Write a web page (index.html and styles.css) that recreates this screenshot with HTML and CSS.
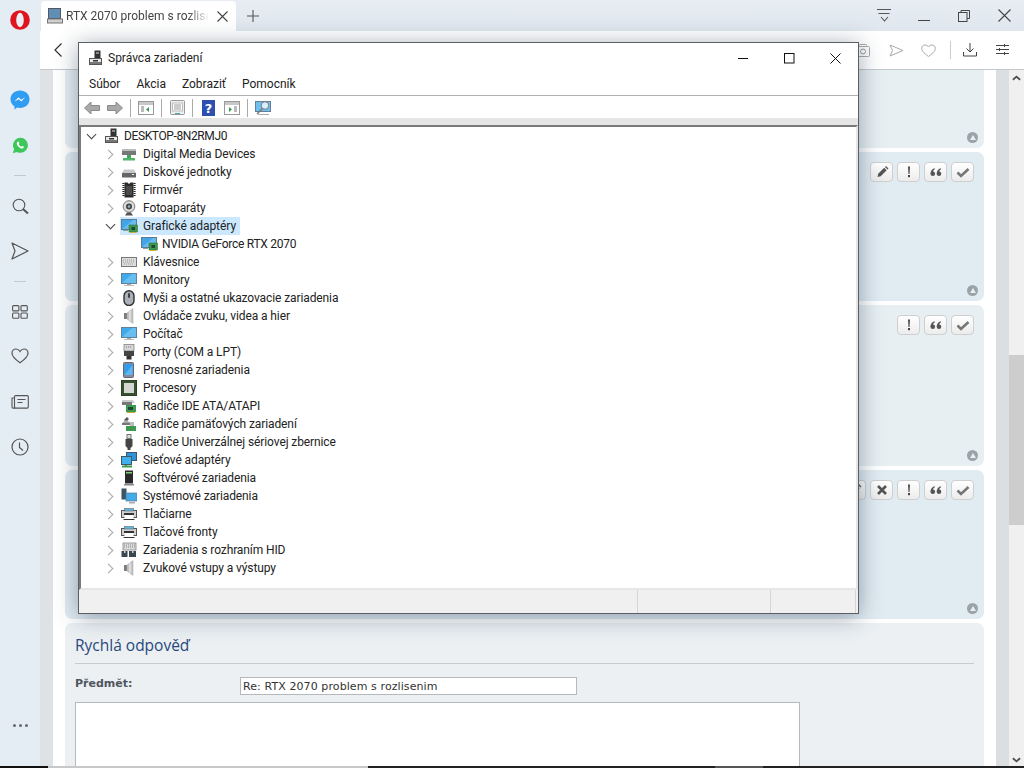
FILE: index.html
```html
<!DOCTYPE html>
<html lang="sk">
<head>
<meta charset="utf-8">
<title>Správca zariadení</title>
<link rel="stylesheet" href="styles.css">
</head>
<body>
<svg class="defs" width="0" height="0">
  <defs>
    <symbol id="i-pc" viewBox="0 0 16 16"><rect x="6.500" y="0.500" width="6" height="8" fill="#333"/><rect x="8" y="2.500" width="3" height="1" fill="#ddd"/><rect x="1.500" y="8.500" width="12" height="6" fill="#e8e8e8" stroke="#555"/><rect x="2" y="12" width="11" height="2" fill="#777"/><rect x="5" y="10" width="5" height="1.500" fill="#333"/></symbol>
    <symbol id="i-media" viewBox="0 0 16 16"><rect x="1" y="4" width="14" height="5" fill="#777"/><rect x="1" y="3" width="14" height="2" fill="#bbb"/><rect x="6" y="9" width="4" height="3" fill="#3fa45b"/><rect x="2" y="12" width="12" height="2.500" fill="#4fb56a"/></symbol>
    <symbol id="i-disk" viewBox="0 0 16 16"><path d="M3 5.500h10l2 3.500H1z" fill="#c8c8c8"/><rect x="1" y="9" width="14" height="4.500" fill="#666"/><rect x="11" y="10" width="2" height="1" fill="#cfe"/></symbol>
    <symbol id="i-chip" viewBox="0 0 16 16"><path d="M2.500 1v14M13.500 1v14" stroke="#222" stroke-width="2" stroke-dasharray="1 1"/><path d="M1.500 1v14M14.500 1v14" stroke="#777" stroke-dasharray="1 1"/><path d="M3.500 0.500h3l1.500 1.500 1.500-1.500h3v15h-9z" fill="#2c2c2c"/><rect x="5" y="4" width="6" height="9" fill="#4a4a4a"/></symbol>
    <symbol id="i-cam" viewBox="0 0 16 16"><circle cx="8" cy="6.500" r="5.800" fill="#dcdcdc" stroke="#777"/><circle cx="8" cy="6.500" r="3" fill="#444"/><circle cx="8" cy="6.500" r="1.300" fill="#8fb6c4"/><path d="M4 15.500h8l-2-3H6z" fill="#555"/></symbol>
    <symbol id="i-gpu" viewBox="0 0 17 14"><rect x="0.500" y="0.500" width="15" height="10" fill="#42a5e8" stroke="#5a7d95"/><path d="M1 10l11-9h3v9z" fill="#8fd0f5" opacity=".5"/><rect x="8" y="6" width="8.500" height="7" fill="#3c9a4e" stroke="#2a6a3a" stroke-width=".5"/><rect x="10.500" y="8" width="3.500" height="3" fill="#243"/><rect x="9" y="13" width="6" height="1" fill="#d6a93c"/><rect x="2" y="11" width="5" height="1" fill="#999"/></symbol>
    <symbol id="i-kbd" viewBox="0 0 16 16"><rect x="0.500" y="3.500" width="15" height="9" fill="#ddd" stroke="#777"/><path d="M2 6h12M2 8h12M3 10h10" stroke="#999" stroke-dasharray="1 1"/></symbol>
    <symbol id="i-mon" viewBox="0 0 16 16"><rect x="0.500" y="1.500" width="15" height="10" fill="#3fa9ec" stroke="#5f8299"/><path d="M1 11l10-9h4v9z" fill="#9ad6f7" opacity=".45"/><rect x="6" y="12" width="4" height="1" fill="#aaa"/><rect x="3" y="13" width="10" height="1" fill="#bbb"/></symbol>
    <symbol id="i-mouse" viewBox="0 0 16 16"><rect x="3" y="0.700" width="10" height="14.800" rx="5" fill="#aab0b5" stroke="#2c3033" stroke-width="1.400"/><rect x="7" y="3" width="2" height="5" rx="1" fill="#3c4248"/></symbol>
    <symbol id="i-snd" viewBox="0 0 16 16"><rect x="3" y="5" width="3" height="6" fill="#7c7c7c"/><path d="M6 5l6-4.500v15L6 11z" fill="#c4c4c4" stroke="#a0a0a0" stroke-width=".5"/><path d="M9 3v10" stroke="#e4e4e4" stroke-width="1.500"/></symbol>
    <symbol id="i-port" viewBox="0 0 16 16"><rect x="3" y="0.500" width="10" height="6.500" fill="#d6d6d6" stroke="#777" stroke-width=".7"/><rect x="3" y="7" width="10" height="5" fill="#444"/><rect x="5.500" y="12" width="5" height="3.500" fill="#333"/><path d="M5 3h6" stroke="#777" stroke-dasharray="1 1"/></symbol>
    <symbol id="i-tablet" viewBox="0 0 16 16"><rect x="2.500" y="0.500" width="10" height="15" rx="1" fill="#889" stroke="#667"/><rect x="3.500" y="2" width="8" height="11" fill="#2e9fee"/><path d="M3.500 13L11.500 3v10z" fill="#7fc8f5" opacity=".6"/></symbol>
    <symbol id="i-cpu" viewBox="0 0 16 16"><rect x="0.500" y="0.500" width="15" height="15" fill="#38522f" stroke="#2b4024"/><rect x="3" y="3" width="10" height="10" fill="#d4d6d4"/></symbol>
    <symbol id="i-ide" viewBox="0 0 16 16"><path d="M1 2h11l2 3H1z" fill="#ccc"/><rect x="1" y="4" width="10" height="3" fill="#777"/><rect x="5" y="7" width="10" height="7" fill="#3c9a4e"/><rect x="7" y="9" width="5" height="3" fill="#243"/><rect x="6" y="14" width="8" height="1" fill="#c9a23c"/></symbol>
    <symbol id="i-mem" viewBox="0 0 16 16"><path d="M6 1l2 2-3 3-2-2z" fill="#555"/><path d="M1 7l4-3 5 3H4z" fill="#aaa"/><rect x="1" y="7" width="8" height="2" fill="#777"/><rect x="5" y="10" width="10" height="5" fill="#3c9a4e"/><rect x="9" y="6" width="4" height="4" fill="#bbb"/></symbol>
    <symbol id="i-usb" viewBox="0 0 16 16"><rect x="6" y="0.500" width="4" height="4" fill="#ddd" stroke="#777"/><path d="M4.500 5h7v7l-2 2v2h-3v-2l-2-2z" fill="#444"/></symbol>
    <symbol id="i-net" viewBox="0 0 16 16"><rect x="5.500" y="0.500" width="10" height="8" fill="#2f93dc" stroke="#456"/><rect x="0.500" y="4.500" width="10" height="8" fill="#3fb0ee" stroke="#456"/><path d="M1 14.500h10" stroke="#3c9a4e" stroke-width="2"/><path d="M5 13v2" stroke="#3c9a4e" stroke-width="2"/></symbol>
    <symbol id="i-soft" viewBox="0 0 16 16"><rect x="4" y="0.500" width="8" height="13" fill="#2a2a2a"/><rect x="5" y="2" width="6" height="1.500" fill="#7fd07f"/><rect x="3" y="14" width="10" height="1.500" fill="#888"/></symbol>
    <symbol id="i-sys" viewBox="0 0 16 16"><rect x="0.500" y="0.500" width="5" height="11" fill="#3c5564"/><rect x="5" y="5" width="11" height="8" fill="#43ace8" stroke="#5a7d95" stroke-width=".7"/><rect x="8" y="14" width="6" height="1.500" fill="#aaa"/></symbol>
    <symbol id="i-prn" viewBox="0 0 16 16"><rect x="0.500" y="4.500" width="15" height="7" fill="#cfcfcf" stroke="#555"/><rect x="3.500" y="2.500" width="9" height="2.500" fill="#58b8ea" stroke="#666" stroke-width=".6"/><rect x="3" y="7" width="10" height="2" fill="#333"/><rect x="3.500" y="9" width="9" height="4.500" fill="#fff"/><rect x="2.500" y="13" width="11" height="1" fill="#333"/></symbol>
    <symbol id="i-hid" viewBox="0 0 16 16"><rect x="2" y="1" width="13" height="7" fill="#ddd" stroke="#777" stroke-width=".7"/><path d="M3 3h11M3 5h11" stroke="#888" stroke-dasharray="1 1"/><rect x="0.500" y="9" width="6" height="6" fill="#3a4650"/><rect x="8" y="9" width="7" height="6" fill="#3a4650"/><rect x="3" y="8" width="1.500" height="3" fill="#ccc"/><rect x="11" y="8" width="1.500" height="3" fill="#ccc"/></symbol>
    <symbol id="a-pen" viewBox="0 0 14 14"><path d="M2.500 12l.7-3.200 6-6 2.500 2.500-6 6zM10 2l1-1 2.500 2.500-1 1z" fill="#555"/></symbol>
    <symbol id="a-bang" viewBox="0 0 14 14"><path d="M6 1.500h2l-.5 7.500h-1z" fill="#444"/><rect x="6" y="10" width="2" height="2.200" fill="#444"/></symbol>
    <symbol id="a-quote" viewBox="0 0 14 14"><circle cx="3.800" cy="8.800" r="2.300" fill="#555"/><circle cx="10" cy="8.800" r="2.300" fill="#555"/><path d="M1.500 8.800C1.500 6 3 4 5.500 3.200L6 4C4.500 4.800 4 6 4 8zM7.700 8.800c0-2.800 1.500-4.800 4-5.600l.5.800C10.700 4.800 10.200 6 10.200 8z" fill="#555"/></symbol>
    <symbol id="a-ok" viewBox="0 0 14 14"><path d="M1.500 7.500l3.500 3.500L12.500 4" fill="none" stroke="#777" stroke-width="2.600"/></symbol>
    <symbol id="a-x" viewBox="0 0 14 14"><path d="M3 3l8 8M11 3l-8 8" fill="none" stroke="#555" stroke-width="2.600"/></symbol>
  </defs>
</svg>

<div class="browser">
  <aside class="sidebar">
    <svg class="logo" viewBox="0 0 20 20" width="20" height="20"><ellipse cx="10" cy="10" rx="9.800" ry="9.800" fill="#e0141f"/><ellipse cx="10" cy="10" rx="3.800" ry="7.200" fill="#e9eff5"/></svg>
    <svg class="messenger" viewBox="0 0 20 20" width="20" height="20"><path d="M10 0.500c5.500 0 9.500 3.800 9.500 8.800s-4 8.700-9.500 8.700c-1 0-1.900-.1-2.800-.4L4.500 19.500v-3C2 14.800.5 12.300.5 9.300.5 4.300 4.500.5 10 .5z" fill="#2f9df2"/><path d="M4.500 11.500l4-4.200 2.500 2.400 4.300-2.400-4 4.300-2.500-2.400z" fill="#fff"/></svg>
    <svg class="whatsapp" viewBox="0 0 20 20" width="17" height="17"><path d="M10 1a8.800 8.800 0 0 1 0 17.600c-1.500 0-3-.4-4.300-1.100L1 19l1.500-4.600A8.800 8.800 0 0 1 10 1z" fill="#3dc65a"/><path d="M6.800 5.500c.5-.4 1-.3 1.200.2l.7 1.600-.8 1.100c.7 1.300 1.700 2.300 3 3l1.100-.9 1.600.8c.4.300.4.800.1 1.200-.9 1.100-2.400 1.200-4 .3-2-1.100-3.500-2.800-4-4.700-.2-1 .3-2 1.100-2.600z" fill="#fff"/></svg>
    <div class="side-rule r1"></div>
    <svg class="side-icon s-search" viewBox="0 0 17 17" width="17" height="17"><circle cx="7" cy="7" r="5.800" fill="none" stroke="#555" stroke-width="1.100"/><path d="M11 11l5 4.500" stroke="#555" stroke-width="2"/></svg>
    <svg class="side-icon s-send" viewBox="0 0 18 18" width="18" height="18"><path d="M1 1l16 8L1 17l3-8z" fill="none" stroke="#555" stroke-width="1.200" stroke-linejoin="round"/></svg>
    <div class="side-rule r2"></div>
    <svg class="side-icon s-grid" viewBox="0 0 16 14" width="16" height="14"><g fill="none" stroke="#555" stroke-width="1.100"><rect x="0.600" y="0.600" width="6.300" height="5.300" rx="1"/><rect x="9" y="0.600" width="6.300" height="5.300" rx="1"/><rect x="0.600" y="8" width="6.300" height="5.300" rx="1"/><rect x="9" y="8" width="6.300" height="5.300" rx="1"/></g></svg>
    <svg class="side-icon s-heart" viewBox="0 0 18 16" width="18" height="16"><path d="M9 14.800C3 10.500 1 8 1 5.200 1 2.800 2.800 1 5 1c1.700 0 3 .9 4 2.500C10 1.900 11.300 1 13 1c2.200 0 4 1.800 4 4.200 0 2.800-2 5.300-8 9.600z" fill="none" stroke="#555" stroke-width="1.200"/></svg>
    <svg class="side-icon s-news" viewBox="0 0 18 14" width="18" height="14"><g fill="none" stroke="#555" stroke-width="1.100"><rect x="3.500" y="0.600" width="13.800" height="12.500" rx="1"/><path d="M3.500 3H1v9c0 .7.500 1.100 1.200 1.100h2"/><path d="M6.500 4.500h8M6.500 7.500h5"/></g></svg>
    <svg class="side-icon s-clock" viewBox="0 0 18 18" width="18" height="18"><circle cx="9" cy="9" r="8" fill="none" stroke="#555" stroke-width="1.200"/><path d="M8.500 4.500v5l3.500 3" fill="none" stroke="#555" stroke-width="1.200"/></svg>
    <div class="side-dots"><i></i><i></i><i></i></div>
  </aside>

  <div class="main">
    <header class="tabbar">
      <div class="tab">
        <svg class="tab-fav" viewBox="0 0 16 16" width="16" height="16"><rect x="1.500" y="0.500" width="12" height="10" fill="#5f8fb4" stroke="#556"/><rect x="0.500" y="11" width="15" height="4" fill="#d0d0d0" stroke="#777"/></svg>
        <span class="tab-title">RTX 2070 problem s rozlisenim</span>
        <svg class="tab-x" viewBox="0 0 11 11" width="11" height="11"><path d="M.5.500l10 10M10.500.500l-10 10" stroke="#444" stroke-width="1.100"/></svg>
      </div>
      <svg class="tab-plus" viewBox="0 0 12 12" width="12" height="12"><path d="M6 0v12M0 6h12" stroke="#555" stroke-width="1.100"/></svg>
      <div class="spacer"></div>
      <svg class="wc wc-filter" viewBox="0 0 15 13" width="15" height="13"><path d="M0 .5h14M1.500 4.500h11" stroke="#555"/><path d="M4 8l3.500 4L11 8" fill="none" stroke="#555" stroke-width="1.100"/></svg>
      <svg class="wc wc-min" viewBox="0 0 12 12" width="12" height="12"><path d="M0 10.500h12" stroke="#444"/></svg>
      <svg class="wc wc-max" viewBox="0 0 12 12" width="12" height="12"><path d="M3 2.500V.5h8.500v8H9" fill="none" stroke="#444"/><rect x=".5" y="2.500" width="8.500" height="9" fill="none" stroke="#444"/></svg>
      <svg class="wc wc-close" viewBox="0 0 13 13" width="13" height="13"><path d="M.5.500l12 12M12.500.500l-12 12" stroke="#444" stroke-width="1.100"/></svg>
    </header>

    <nav class="toolbar">
      <svg viewBox="0 0 8 14" width="8" height="14"><path d="M7.500.500L1 7l6.500 6.500" fill="none" stroke="#333" stroke-width="1.200"/></svg>
      <div class="spacer"></div>
      <svg class="tb-g tb-cam" viewBox="0 0 14 13" width="14" height="13"><rect x=".5" y="2.500" width="13" height="10" rx="1" fill="none" stroke="#aaa"/><rect x="4" y=".5" width="6" height="2" fill="none" stroke="#aaa"/><circle cx="7" cy="7.500" r="2.500" fill="none" stroke="#999"/></svg>
      <svg class="tb-g tb-send" viewBox="0 0 15 13" width="15" height="13"><path d="M1 1l13 5.500L1 12l2.500-5.500z" fill="none" stroke="#aaa" stroke-linejoin="round"/></svg>
      <svg class="tb-g tb-heart" viewBox="0 0 15 13" width="15" height="13"><path d="M7.500 12.500C2 8.500.7 6.500.7 4.300.7 2.300 2.200 1 4 1c1.500 0 2.700.8 3.500 2C8.300 1.800 9.500 1 11 1c1.800 0 3.300 1.300 3.300 3.300 0 2.200-1.300 4.200-6.800 8.200z" fill="none" stroke="#aaa"/></svg>
      <div class="tb-sep"></div>
      <svg class="tb-g tb-down" viewBox="0 0 14 14" width="14" height="14"><path d="M7 0v9M3.500 5.500L7 9l3.500-3.500M.5 9v4h13V9" fill="none" stroke="#444"/></svg>
      <svg class="tb-g tb-set" viewBox="0 0 13 12" width="13" height="12"><path d="M0 1.500h13M0 5.500h13M0 9.500h13" stroke="#444"/><path d="M8.500 0v3M3.500 4v3M8.500 8v3" stroke="#444"/></svg>
    </nav>

    <div class="page">
      <div class="gutter"></div>
      <div class="content">
        <section class="post post-a first"><span class="up"></span></section>
        <section class="post post-b second">
          <div class="actions">
            <span class="act"><svg width="14" height="14"><use href="#a-pen"/></svg></span>
            <span class="act"><svg width="14" height="14"><use href="#a-bang"/></svg></span>
            <span class="act"><svg width="14" height="14"><use href="#a-quote"/></svg></span>
            <span class="act"><svg width="14" height="14"><use href="#a-ok"/></svg></span>
          </div>
          <span class="up"></span>
        </section>
        <section class="post post-a third">
          <div class="actions">
            <span class="act"><svg width="14" height="14"><use href="#a-bang"/></svg></span>
            <span class="act"><svg width="14" height="14"><use href="#a-quote"/></svg></span>
            <span class="act"><svg width="14" height="14"><use href="#a-ok"/></svg></span>
          </div>
          <span class="up"></span>
        </section>
        <section class="post post-b fourth">
          <div class="actions">
            <span class="act"><svg width="14" height="14"><use href="#a-pen"/></svg></span>
            <span class="act"><svg width="14" height="14"><use href="#a-x"/></svg></span>
            <span class="act"><svg width="14" height="14"><use href="#a-bang"/></svg></span>
            <span class="act"><svg width="14" height="14"><use href="#a-quote"/></svg></span>
            <span class="act"><svg width="14" height="14"><use href="#a-ok"/></svg></span>
          </div>
          <span class="up"></span>
        </section>
        <section class="reply">
          <h2 class="reply-title">Rychlá odpověď</h2>
          <div class="subject">
            <label class="subject-label">Předmět:</label>
            <div class="subject-input">Re: RTX 2070 problem s rozlisenim</div>
          </div>
          <div class="textarea"></div>
        </section>
      </div>
      <div class="scroll-track"></div>
      <div class="scrollbar">
        <svg class="sb-up" viewBox="0 0 10 6" width="9" height="6"><path d="M1 5l4-3.500L9 5" fill="none" stroke="#505050" stroke-width="2"/></svg>
        <div class="sb-thumb"></div>
        <svg class="sb-down" viewBox="0 0 10 6" width="9" height="6"><path d="M1 1l4 3.500L9 1" fill="none" stroke="#505050" stroke-width="2"/></svg>
      </div>
    </div>
  </div>
</div>

<div class="taskedge"><span class="te-black"></span><span class="te-light"></span><span class="te-dark"></span><span class="te-mid"></span><span class="te-dark long"></span></div>

<div class="window">
  <div class="win-title">
    <svg class="ti" width="16" height="16"><use href="#i-pc"/></svg>
    <span class="win-name">Správca zariadení</span>
    <div class="spacer"></div>
    <div class="w-btn"><svg viewBox="0 0 11 11" width="11" height="11"><path d="M0 5.500h10" stroke="#111"/></svg></div>
    <div class="w-btn"><svg viewBox="0 0 11 11" width="11" height="11"><rect x=".5" y=".5" width="9.500" height="9.500" fill="none" stroke="#111"/></svg></div>
    <div class="w-btn"><svg viewBox="0 0 11 11" width="11" height="11"><path d="M.5.500l10 10M10.500.500l-10 10" stroke="#111"/></svg></div>
  </div>
  <div class="win-menu"><span>Súbor</span><span>Akcia</span><span>Zobraziť</span><span>Pomocník</span></div>
  <div class="win-tools">
    <svg viewBox="0 0 16 14" width="16" height="14"><path d="M.5 7l6.500-6v3.500h8.500v5H7V13z" fill="#a9a9a9" stroke="#8a8a8a"/></svg>
    <svg viewBox="0 0 16 14" width="16" height="14"><path d="M15.500 7L9 1v3.500H.5v5H9V13z" fill="#a9a9a9" stroke="#8a8a8a"/></svg>
    <i class="wt-sep"></i>
    <svg viewBox="0 0 16 14" width="16" height="14"><rect x=".5" y=".5" width="15" height="13" fill="#fff" stroke="#999"/><rect x="1" y="1" width="14" height="3" fill="#c8c8c8"/><path d="M3 6h3M3 8h3M3 10h3" stroke="#777"/><path d="M11 6v5L8 8.500z" fill="#3c9a4e"/></svg>
    <i class="wt-sep"></i>
    <svg class="m1" viewBox="0 0 15 16" width="15" height="16"><rect x=".5" y=".5" width="14" height="14" rx="1" fill="#eee" stroke="#999"/><rect x="2.500" y="3" width="10" height="8" fill="#fff" stroke="#bbb"/><path d="M4 5h7M4 7h7M4 9h7" stroke="#999"/><rect x="5" y="13" width="5" height="1" fill="#4aa"/></svg>
    <i class="wt-sep"></i>
    <svg class="m2" viewBox="0 0 13 16" width="13" height="16"><rect width="13" height="16" fill="#2d4fb0"/><text class="q-mark" x="6.500" y="13" text-anchor="middle">?</text></svg>
    <svg class="m2" viewBox="0 0 16 14" width="16" height="14"><rect x=".5" y=".5" width="15" height="13" fill="#fff" stroke="#999"/><rect x="1" y="1" width="14" height="3" fill="#c8c8c8"/><path d="M10 6h3M10 8h3M10 10h3" stroke="#777"/><path d="M5 6v5l3-2.500z" fill="#3c9a4e"/></svg>
    <i class="wt-sep"></i>
    <svg viewBox="0 0 17 16" width="17" height="16"><rect x=".5" y="1.500" width="15" height="10" fill="#6fc0ee" stroke="#5f8299"/><circle cx="10" cy="5.500" r="3.800" fill="#d8eefb" stroke="#778"/><path d="M7.500 8.500L2 14" stroke="#777" stroke-width="1.500"/><path d="M3 14.500h11" stroke="#aaa"/></svg>
  </div>
  <div class="win-strip"></div>
  <div class="tree">
    <div class="row root"><span class="chev open"></span><svg class="ti" width="16" height="16"><use href="#i-pc"/></svg><span class="lbl">DESKTOP-8N2RMJ0</span></div>
    <div class="row"><span class="chev"></span><svg class="ti" width="16" height="16"><use href="#i-media"/></svg><span class="lbl">Digital Media Devices</span></div>
    <div class="row"><span class="chev"></span><svg class="ti" width="16" height="16"><use href="#i-disk"/></svg><span class="lbl">Diskové jednotky</span></div>
    <div class="row"><span class="chev"></span><svg class="ti" width="16" height="16"><use href="#i-chip"/></svg><span class="lbl">Firmvér</span></div>
    <div class="row"><span class="chev"></span><svg class="ti" width="16" height="16"><use href="#i-cam"/></svg><span class="lbl">Fotoaparáty</span></div>
    <div class="row"><span class="chev open"></span><span class="sel"><svg class="ti" width="17" height="14"><use href="#i-gpu"/></svg><span class="lbl">Grafické adaptéry</span></span></div>
    <div class="row child"><svg class="ti" width="17" height="14"><use href="#i-gpu"/></svg><span class="lbl">NVIDIA GeForce RTX 2070</span></div>
    <div class="row"><span class="chev"></span><svg class="ti" width="16" height="16"><use href="#i-kbd"/></svg><span class="lbl">Klávesnice</span></div>
    <div class="row"><span class="chev"></span><svg class="ti" width="16" height="16"><use href="#i-mon"/></svg><span class="lbl">Monitory</span></div>
    <div class="row"><span class="chev"></span><svg class="ti" width="16" height="16"><use href="#i-mouse"/></svg><span class="lbl">Myši a ostatné ukazovacie zariadenia</span></div>
    <div class="row"><span class="chev"></span><svg class="ti" width="16" height="16"><use href="#i-snd"/></svg><span class="lbl">Ovládače zvuku, videa a hier</span></div>
    <div class="row"><span class="chev"></span><svg class="ti" width="16" height="16"><use href="#i-mon"/></svg><span class="lbl">Počítač</span></div>
    <div class="row"><span class="chev"></span><svg class="ti" width="16" height="16"><use href="#i-port"/></svg><span class="lbl">Porty (COM a LPT)</span></div>
    <div class="row"><span class="chev"></span><svg class="ti" width="16" height="16"><use href="#i-tablet"/></svg><span class="lbl">Prenosné zariadenia</span></div>
    <div class="row"><span class="chev"></span><svg class="ti" width="16" height="16"><use href="#i-cpu"/></svg><span class="lbl">Procesory</span></div>
    <div class="row"><span class="chev"></span><svg class="ti" width="16" height="16"><use href="#i-ide"/></svg><span class="lbl">Radiče IDE ATA/ATAPI</span></div>
    <div class="row"><span class="chev"></span><svg class="ti" width="16" height="16"><use href="#i-mem"/></svg><span class="lbl">Radiče pamäťových zariadení</span></div>
    <div class="row"><span class="chev"></span><svg class="ti" width="16" height="16"><use href="#i-usb"/></svg><span class="lbl">Radiče Univerzálnej sériovej zbernice</span></div>
    <div class="row"><span class="chev"></span><svg class="ti" width="16" height="16"><use href="#i-net"/></svg><span class="lbl">Sieťové adaptéry</span></div>
    <div class="row"><span class="chev"></span><svg class="ti" width="16" height="16"><use href="#i-soft"/></svg><span class="lbl">Softvérové zariadenia</span></div>
    <div class="row"><span class="chev"></span><svg class="ti" width="16" height="16"><use href="#i-sys"/></svg><span class="lbl">Systémové zariadenia</span></div>
    <div class="row"><span class="chev"></span><svg class="ti" width="16" height="16"><use href="#i-prn"/></svg><span class="lbl">Tlačiarne</span></div>
    <div class="row"><span class="chev"></span><svg class="ti" width="16" height="16"><use href="#i-prn"/></svg><span class="lbl">Tlačové fronty</span></div>
    <div class="row"><span class="chev"></span><svg class="ti" width="16" height="16"><use href="#i-hid"/></svg><span class="lbl">Zariadenia s rozhraním HID</span></div>
    <div class="row"><span class="chev"></span><svg class="ti" width="16" height="16"><use href="#i-snd"/></svg><span class="lbl">Zvukové vstupy a výstupy</span></div>
  </div>
  <div class="status"><span class="st-b"></span><span class="st-c"></span><span class="st-d"></span></div>
</div>
</body>
</html>
```
FILE: styles.css
```css
* { box-sizing: border-box; }
html, body { margin: 0; height: 768px; overflow: hidden; background: #fff; }
.defs { position: absolute; }
.spacer { flex: 1; }

.browser { display: flex; height: 768px; font-family: "Liberation Sans", sans-serif; }

/* Opera sidebar */
.sidebar { width: 40px; flex: none; background: #e4ecf4; display: flex; flex-direction: column; align-items: center; padding-top: 10px; }
.sidebar svg { flex: none; }
.messenger { margin-top: 60px; }
.whatsapp { margin-top: 27px; }
.side-rule { width: 12px; height: 1px; flex: none; background: #c4c9ce; }
.r1 { margin-top: 21px; }
.r2 { margin-top: 21px; }
.s-search { margin-top: 22px; }
.s-send { margin-top: 27px; }
.s-grid { margin-top: 23px; }
.s-heart { margin-top: 29px; }
.s-news { margin-top: 31px; }
.s-clock { margin-top: 29px; }
.side-dots { margin-top: 268px; display: flex; gap: 3px; }
.side-dots i { width: 3px; height: 3px; border-radius: 50%; background: #667; }

.main { flex: 1; min-width: 0; display: flex; flex-direction: column; }

/* Tab strip */
.tabbar { height: 31px; flex: none; background: linear-gradient(#e7edf3, #dfe6ee); display: flex; align-items: center; padding-left: 1px; }
.tab { width: 195px; height: 30px; margin-top: 1px; background: #fff; border-radius: 4px 4px 0 0; display: flex; align-items: center; padding-left: 6px; }
.tab-fav { flex: none; margin-right: 3px; }
.tab-title { width: 143px; flex: none; overflow: hidden; white-space: nowrap; font: 12px Roboto, sans-serif; color: #444; -webkit-mask-image: linear-gradient(90deg, #000 85%, transparent); mask-image: linear-gradient(90deg, #000 85%, transparent); }
.tab-x { flex: none; margin-left: 8px; }
.tab-plus { margin-left: 11px; }
.wc { flex: none; }
.wc-filter { margin-right: 26px; }
.wc-min { margin-right: 28px; }
.wc-max { margin-right: 28px; }
.wc-close { margin-right: 13px; }

/* Address bar */
.toolbar { height: 39px; flex: none; background: #fff; border-bottom: 1px solid #c3c8cd; display: flex; align-items: center; padding: 0 15px 0 14px; }
.tb-g { flex: none; }
.tb-send { margin-left: 19px; }
.tb-heart { margin-left: 17px; }
.tb-sep { width: 1px; height: 18px; background: #ccc; margin-left: 14px; }
.tb-down { margin-left: 12px; }
.tb-set { margin-left: 19px; }

/* Page */
.page { flex: 1; display: flex; min-height: 0; overflow: hidden; }
.gutter { width: 13px; flex: none; background: #dfe2e4; }
.content { width: 943px; flex: none; padding: 0 12px; display: flex; flex-direction: column; background: #fff; }
.post { position: relative; flex: none; border-radius: 7px; padding: 10px; }
.post-a { background: #e7eff3; }
.post-b { background: #e1ebf2; }
.post.first { height: 78px; border-radius: 0 0 7px 7px; }
.post.second { height: 149px; margin-top: 4px; }
.post.third { height: 161px; margin-top: 4px; }
.post.fourth { height: 149px; margin-top: 4px; }
.actions { display: flex; justify-content: flex-end; gap: 4px; }
.act { width: 23px; height: 20px; border: 1px solid #cfcfcf; border-radius: 4px; background: linear-gradient(#fff, #ececec); display: flex; align-items: center; justify-content: center; }
.up { position: absolute; right: 6px; bottom: 5px; width: 11px; height: 11px; border-radius: 50%; background: #9ba3a8; }
.up::after { content: ""; position: absolute; left: 2.500px; top: 2.500px; border: 3px solid transparent; border-top: 0; border-bottom: 5px solid #e8eef2; }
.reply { flex: 1; margin-top: 4px; background: #ecf0f3; border-radius: 7px 7px 0 0; padding: 0 10px; }
.reply-title { margin: 0; height: 41px; padding-top: 12px; border-bottom: 1px solid #c8cbce; font: 400 15.500px/20px "Open Sans", sans-serif; color: #28497c; }
.subject { display: flex; height: 38px; padding-top: 13px; }
.subject-label { width: 165px; height: 16px; margin-top: -1px; flex: none; font: bold 11px/16px "DejaVu Sans", sans-serif; color: #4e5660; }
.subject-input { width: 337px; height: 18px; border: 1px solid #b5b9bc; background: #fff; padding-left: 2px; font: 11px/17px "DejaVu Sans", sans-serif; letter-spacing: .09px; color: #333; }
.textarea { width: 725px; height: 80px; border: 1px solid #b5b9bc; background: #fff; }

.scroll-track { width: 13px; flex: none; background: #dcdfe2; }
.scrollbar { width: 15px; flex: none; background: #f0f0f0; display: flex; flex-direction: column; align-items: center; padding-top: 5px; }
.sb-up, .sb-down { flex: none; }
.sb-thumb { width: 15px; height: 170px; flex: none; margin-top: 274px; background: #cdcdcd; }
.sb-down { margin-top: auto; margin-bottom: 5px; }

.taskedge { position: absolute; left: 0; right: 0; bottom: 0; height: 2px; display: flex; background: #222; }
.te-black { width: 48px; background: #111; }
.te-light { width: 320px; background: #c8c8c8; }
.te-dark { width: 347px; background: #222; }
.te-mid { width: 48px; background: #555; }
.te-dark.long { flex: 1; width: auto; }

/* Device manager window */
.window { position: absolute; left: 78px; top: 42px; width: 781px; height: 572px; background: #fff; border: 1px solid #5b5f63; box-shadow: 0 3px 22px rgba(40, 60, 80, .45); display: flex; flex-direction: column; font-family: Roboto, "Open Sans", sans-serif; font-size: 12px; color: #222; }
.win-title { height: 28px; flex: none; display: flex; align-items: center; padding: 2px 0 0 9px; }
.win-name { margin-left: 4px; }
.w-btn { width: 46px; height: 26px; display: flex; align-items: center; justify-content: center; }
.win-menu { height: 25px; flex: none; display: flex; align-items: center; gap: 16px; padding: 2px 0 0 10px; border-bottom: 1px solid #b0b0b0; }
.win-tools { height: 22px; flex: none; display: flex; align-items: center; gap: 7px; padding: 1px 0 0 5px; }
.win-tools svg { flex: none; }
.wt-sep { width: 1px; height: 18px; background: #aaa; flex: none; }
.m1 { margin-left: 1px; }
.m2 { margin-left: 2px; }
.q-mark { font: bold 13px "DejaVu Sans", sans-serif; fill: #fff; }
.win-strip { height: 7px; flex: none; background: #e6e6e6; }
.tree { height: 465px; flex: none; border-top: 2px solid #7a7a7a; border-left: 2px solid #7a7a7a; border-right: 2px solid #e6e6e6; border-bottom: 2px solid #e6e6e6; display: flex; flex-direction: column; }
.row { height: 18px; flex: none; display: flex; align-items: center; padding-left: 24px; white-space: nowrap; }
.row.root { padding-left: 5px; }
.row.child { padding-left: 60px; }
.chev { width: 10px; height: 10px; flex: none; margin-right: 6px; position: relative; }
.chev::after { content: ""; position: absolute; left: 0; top: 2px; width: 6px; height: 6px; border-right: 1.300px solid #a6a6a6; border-top: 1.300px solid #a6a6a6; transform: rotate(45deg); }
.chev.open::after { left: 2px; top: 0; border-color: #444; transform: rotate(135deg); }
.ti { flex: none; }
.lbl { margin-left: 6px; line-height: 18px; letter-spacing: -.1px; }
.row.root .ti { margin-left: 2px; }
.row.root .lbl { margin-left: 4px; letter-spacing: -.38px; }
.row.child .lbl { margin-left: 4px; letter-spacing: -.28px; }
.sel { display: flex; align-items: center; background: #cce8ff; height: 18px; padding-right: 4px; padding-left: 1px; margin-left: -1px; }
.sel .lbl { margin-left: 5px; letter-spacing: -.05px; }
.status { flex: 1; background: #f0f0f0; display: flex; justify-content: flex-end; }
.status span { border-left: 1px solid #d5d5d5; height: 100%; }
.st-b { width: 133px; }
.st-c { width: 85px; }
.st-d { width: 3px; }
```
